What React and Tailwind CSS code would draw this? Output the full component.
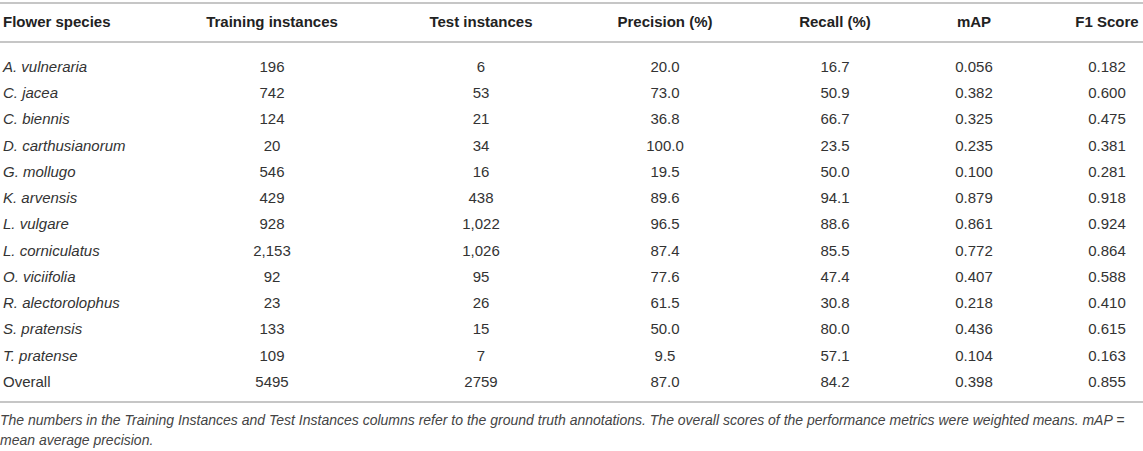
import React from "react";

const cols = [
  "w-[202px] shrink-0 pl-[3px] text-left",
  "w-[140px] shrink-0 text-center",
  "ml-[79px] w-[120px] shrink-0 text-center",
  "ml-[69px] w-[110px] shrink-0 text-center",
  "ml-[65px] w-[100px] shrink-0 text-center",
  "ml-[49px] w-[80px] shrink-0 text-center",
  "ml-[57px] w-[72px] shrink-0 text-center",
];

const headers = [
  "Flower species",
  "Training instances",
  "Test instances",
  "Precision (%)",
  "Recall (%)",
  "mAP",
  "F1 Score",
];

const rows = [
  ["A. vulneraria", "196", "6", "20.0", "16.7", "0.056", "0.182"],
  ["C. jacea", "742", "53", "73.0", "50.9", "0.382", "0.600"],
  ["C. biennis", "124", "21", "36.8", "66.7", "0.325", "0.475"],
  ["D. carthusianorum", "20", "34", "100.0", "23.5", "0.235", "0.381"],
  ["G. mollugo", "546", "16", "19.5", "50.0", "0.100", "0.281"],
  ["K. arvensis", "429", "438", "89.6", "94.1", "0.879", "0.918"],
  ["L. vulgare", "928", "1,022", "96.5", "88.6", "0.861", "0.924"],
  ["L. corniculatus", "2,153", "1,026", "87.4", "85.5", "0.772", "0.864"],
  ["O. viciifolia", "92", "95", "77.6", "47.4", "0.407", "0.588"],
  ["R. alectorolophus", "23", "26", "61.5", "30.8", "0.218", "0.410"],
  ["S. pratensis", "133", "15", "50.0", "80.0", "0.436", "0.615"],
  ["T. pratense", "109", "7", "9.5", "57.1", "0.104", "0.163"],
  ["Overall", "5495", "2759", "87.0", "84.2", "0.398", "0.855"],
];

export default function App() {
  return (
    <div className="w-[1143px] h-[451px] overflow-hidden bg-white font-['Liberation_Sans',Arial,sans-serif]">
      <div className="mt-[2px] border-t-2 border-[#c6c6c6]">
        <div className="flex h-[39px] items-center border-b-2 border-[#c6c6c6] text-[15px] font-bold text-[#222]">
          {headers.map((h, i) => (
            <div key={h} className={cols[i]}>
              {h}
            </div>
          ))}
        </div>
        <div className="pt-[11px] pb-[6px] border-b-2 border-[#c6c6c6] text-[15px] text-[#333]">
          {rows.map((r, ri) => (
            <div key={r[0]} className="flex h-[26.25px] items-center">
              {r.map((c, i) => (
                <div
                  key={i}
                  className={
                    cols[i] + (i === 0 && ri < rows.length - 1 ? " italic" : "")
                  }
                >
                  {c}
                </div>
              ))}
            </div>
          ))}
        </div>
      </div>
      <p className="pt-[7px] pr-[2px] text-[14px] leading-[20px] italic text-[#444]">
        The numbers in the Training Instances and Test Instances columns refer to
        the ground truth annotations. The overall scores of the performance
        metrics were weighted means. mAP = mean average precision.
      </p>
    </div>
  );
}
